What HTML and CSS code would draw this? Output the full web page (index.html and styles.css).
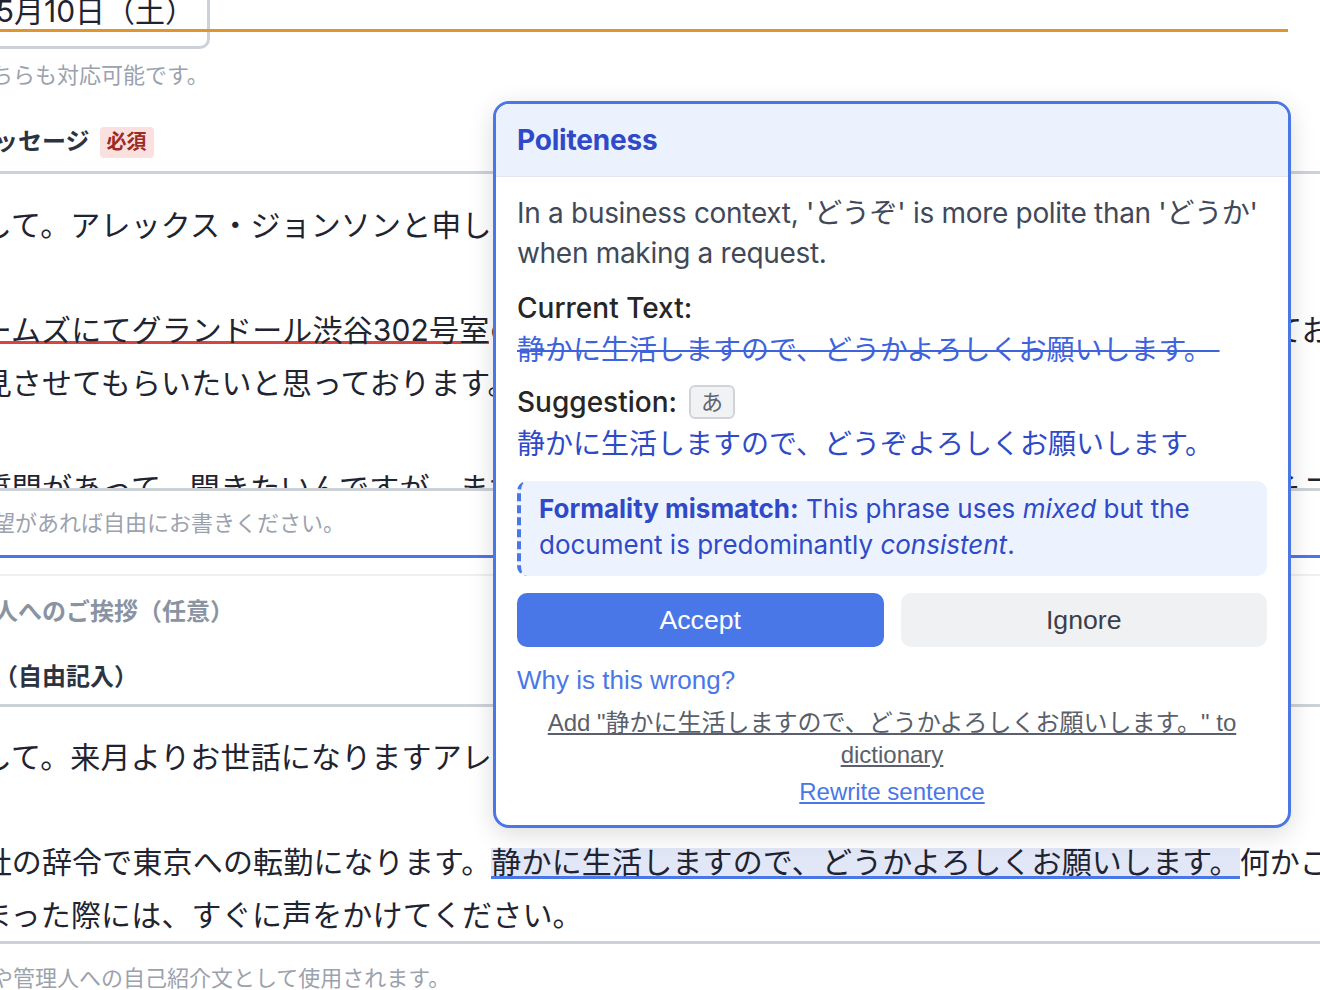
FILE: index.html
```html
<!DOCTYPE html>
<html lang="ja">
    <head>
        <meta charset="utf-8">
        <title>入居者プロフィール</title>
        <link rel="stylesheet" href="styles.css">
    </head>
    <body>
        <div class="form">
            <div class="date-input">2025年5月10日（土）</div>
            <p class="hint">平日・土日どちらも対応可能です。</p>

            <div class="label-row">
                <span class="label">ご近所へのメッセージ</span>
                <span class="badge">必須</span>
            </div>
            <div class="textarea clip">
                <div class="line">はじめまして。アレックス・ジョンソンと申します。</div>
                <div class="line"></div>
                <div class="line">先日、<span class="err">ホームズにてグランドール渋谷302号室</span>の賃貸契約をさせていただく予定で、現在入居準備を進めております。</div>
                <div class="line">改めて内見させてもらいたいと思っております。</div>
                <div class="line"></div>
                <div class="line">いくつか質問があって、聞きたいんですが、まず駐車場の利用について教えていただけますでしょうか。そこに駐輪場もあれば</div>
            </div>
            <div class="text-input">その他のご要望があれば自由にお書きください。</div>

            <div class="divider"></div>

            <div class="label-row first">
                <span class="label muted">マンション住人へのご挨拶（任意）</span>
            </div>
            <div class="label-row second">
                <span class="label">ご挨拶の文面（自由記入）</span>
            </div>
            <div class="textarea boxed">
                <div class="line">はじめまして。来月よりお世話になりますアレックス・ジョンソンです。</div>
                <div class="line"></div>
                <div class="line">今回、会社の辞令で東京への転勤になります。<span class="hl">静かに生活しますので、どうかよろしくお願いします。</span>何かご迷惑をおかけすることがあれば</div>
                <div class="line">かけてしまった際には、すぐに声をかけてください。</div>
            </div>
            <p class="hint last">近隣住民の方や管理人への自己紹介文として使用されます。</p>
        </div>

        <div class="mark-line"></div>

        <div class="popover">
            <div class="pop-head">Politeness</div>
            <div class="pop-body">
                <p class="pop-desc">In a business context, 'どうぞ' is more polite than 'どうか' when making a request.</p>
                <div class="pop-label">Current Text:</div>
                <div class="pop-current">静かに生活しますので、どうかよろしくお願いします。&nbsp;</div>
                <div class="pop-label sugg">Suggestion: <span class="kana">あ</span></div>
                <div class="pop-suggest">静かに生活しますので、どうぞよろしくお願いします。</div>
                <div class="pop-note"><strong>Formality mismatch:</strong> This phrase uses <em>mixed</em> but the document is predominantly <em>consistent</em>.</div>
                <div class="pop-actions">
                    <button class="btn accept">Accept</button>
                    <button class="btn ignore">Ignore</button>
                </div>
                <button class="why">Why is this wrong?</button>
                <div class="pop-links">
                    <a class="add-link">Add "静かに生活しますので、どうかよろしくお願いします。" to dictionary</a>
                    <a class="rewrite-link">Rewrite sentence</a>
                </div>
            </div>
        </div>
    </body>
</html>
```

FILE: styles.css
```css
*{
    margin: 0;
    padding: 0;
    box-sizing: border-box;
}
html, body {
    overflow: hidden;
}
body {
    width: 1320px;
    height: 990px;
    position: relative;
    background: #fff;
    color: #1f2430;
    font-family: Inter, "Noto Sans CJK JP", sans-serif;
}
.form {
    width: 1700px;
    margin: -21px 0 0 -150px;
}
.date-input {
    width: 360px;
    height: 70px;
    border: 3px solid #cdd1d8;
    border-radius: 10px;
    padding-left: 39px;
    font-size: 30px;
    line-height: 58px;
    color: #1f2430;
}
.hint {
    margin-top: 11px;
    padding-left: 9px;
    font-size: 22px;
    line-height: 30px;
    color: #9ba2ae;
}
.hint.last {
    margin-top: 19px;
}
.label-row {
    display: flex;
    align-items: center;
    height: 32px;
    margin-top: 36px;
}
.label-row.first {
    margin-top: 20px;
}
.label-row.second {
    margin-top: 33px;
}
.label {
    font-size: 24px;
    font-weight: 700;
    line-height: 32px;
    color: #2d3441;
}
.label.muted {
    color: #8a93a2;
}
.badge {
    margin-left: 10px;
    height: 31px;
    padding: 0 7px;
    border-radius: 4px;
    background: #fbe0e0;
    color: #9b2b25;
    font-size: 20px;
    font-weight: 700;
    line-height: 31px;
}
.textarea {
    border-top: 3px solid #cdd1d8;
    padding: 25px 0 0 11px;
    font-size: 30px;
    line-height: 52.5px;
    letter-spacing: 0.16px;
    white-space: nowrap;
    color: #1f2430;
}
.textarea.clip {
    height: 317px;
    overflow: hidden;
    margin-top: 13px;
}
.textarea.boxed {
    margin-top: 11px;
    padding-top: 24px;
    border-bottom: 3px solid #cdd1d8;
}
.line {
    height: 52.5px;
}
.err {
    display: inline-block;
    line-height: 22px;
    border-bottom: 3px solid #d6453f;
}
.hl {
    display: inline-block;
    line-height: 28px;
    background: #e2e7f8;
    border-bottom: 3px solid #4a77e8;
}
.text-input {
    height: 70px;
    border-top: 3px solid #cdd1d8;
    border-bottom: 3px solid #4a77e8;
    padding-left: 11px;
    font-size: 22px;
    line-height: 64px;
    color: #9ba2ae;
}
.divider {
    height: 2px;
    margin-top: 16px;
    background: #eef0f2;
}
.mark-line {
    position: absolute;
    left: 0;
    top: 29px;
    width: 1288px;
    height: 3px;
    background: #e0962e;
}

/* popover */
.popover {
    position: absolute;
    left: 493px;
    top: 101px;
    width: 798px;
    border: 3px solid #4a77e8;
    border-radius: 16px;
    background: #fff;
    box-shadow: 0 6px 26px rgba(0, 0, 0, 0.14);
    overflow: hidden;
}
.pop-head {
    padding: 19px 21px;
    background: #ebf2fe;
    border-bottom: 1px solid #e4e8ee;
    font-size: 28px;
    font-weight: 700;
    line-height: 34px;
    letter-spacing: -0.2px;
    color: #2f4ac8;
}
.pop-body {
    padding: 16px 21px 17px;
}
.pop-desc {
    font-size: 28px;
    line-height: 40px;
    letter-spacing: -0.3px;
    color: #414958;
}
.pop-label {
    margin-top: 14px;
    font-size: 28px;
    font-weight: 500;
    line-height: 42px;
    color: #262626;
}
.pop-label.sugg {
    margin-top: 10px;
    display: flex;
    align-items: center;
}
.kana {
    margin-left: 12px;
    width: 46px;
    height: 34px;
    border: 2px solid #d0d4da;
    border-radius: 6px;
    background: #f1f2f4;
    color: #5f6470;
    font-size: 22px;
    font-weight: 400;
    line-height: 30px;
    text-align: center;
}
.pop-current {
    font-size: 28px;
    line-height: 42px;
    color: #3e63dd;
    text-decoration: line-through;
    text-decoration-thickness: 2px;
}
.pop-suggest {
    font-size: 28px;
    line-height: 42px;
    color: #2f4ac8;
}
.pop-note {
    margin-top: 16px;
    padding: 10px 19px 13px 18px;
    border-left: 4px dashed #4a77e8;
    border-radius: 10px;
    background: #edf3fe;
    font-size: 26px;
    line-height: 36px;
    color: #2f4ac8;
}
.pop-actions {
    display: flex;
    gap: 17px;
    margin-top: 17px;
}
.btn {
    flex: 1;
    height: 54px;
    border: 0;
    border-radius: 10px;
    font-family: "Liberation Sans", Arial, sans-serif;
    font-size: 26.67px;
}
.btn.accept {
    background: #4a77e8;
    color: #fff;
}
.btn.ignore {
    background: #f0f1f3;
    color: #3a3f4a;
}
.why {
    display: block;
    margin-top: 18px;
    border: 0;
    background: none;
    font-family: "Liberation Sans", Arial, sans-serif;
    font-size: 26px;
    line-height: 30px;
    color: #4a77e8;
}
.pop-links {
    margin-top: 12px;
    text-align: center;
    font-family: "Liberation Sans", Arial, "Noto Sans CJK JP", sans-serif;
    font-size: 24px;
    line-height: 32px;
}
.add-link {
    color: #5a5f6b;
    text-decoration: underline;
}
.rewrite-link {
    display: block;
    margin-top: 5px;
    color: #4a77e8;
    text-decoration: underline;
}
```
